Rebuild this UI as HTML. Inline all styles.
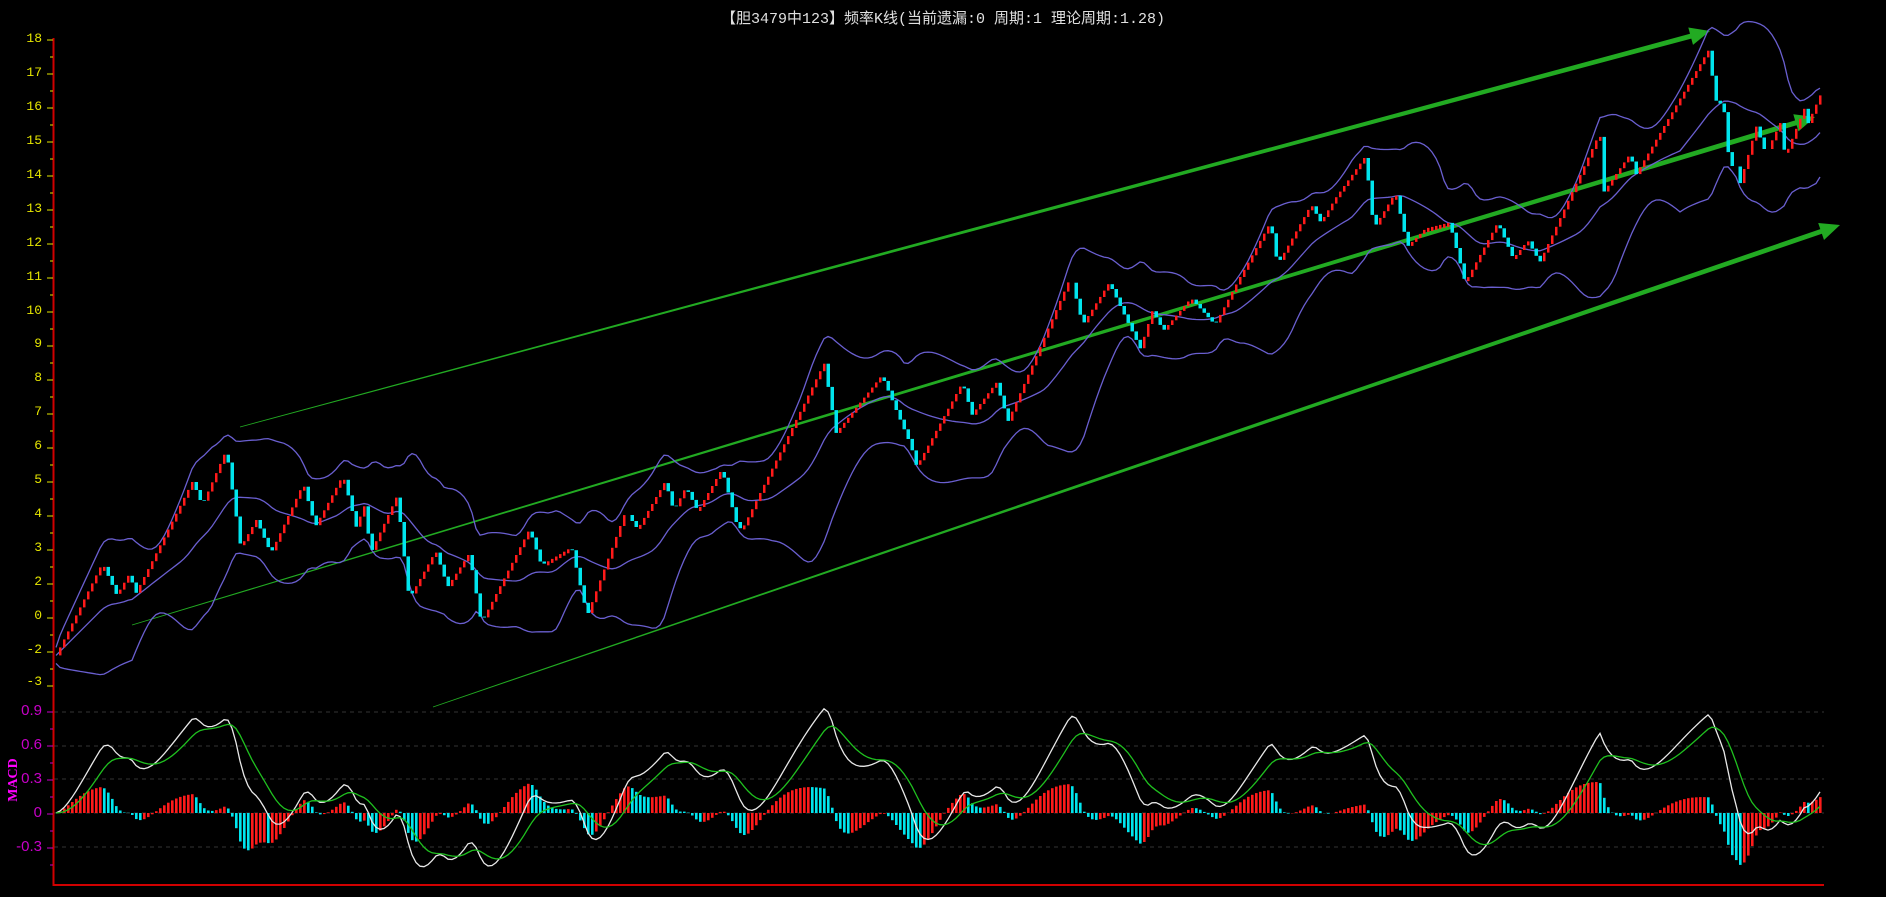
<!DOCTYPE html>
<html><head><meta charset="utf-8">
<style>
html,body{margin:0;padding:0;background:#000;width:1886px;height:897px;overflow:hidden}
#t{position:absolute;left:0;top:7px;width:1886px;text-align:center;color:#e0e0e0;font:15px "Liberation Mono","Noto Sans CJK SC",monospace;white-space:pre}
.yl{position:absolute;left:0;width:42px;text-align:right;color:#e6e600;font:13px "Liberation Mono",monospace}
.ml{position:absolute;left:0;width:42px;text-align:right;color:#c800c8;font:15px "Liberation Sans",sans-serif}
#macd{position:absolute;left:-8px;top:772px;color:#ff00ff;font:bold 14px "Liberation Serif",serif;transform:rotate(-90deg);transform-origin:center}
svg{position:absolute;left:0;top:0}
</style></head><body>
<div id="t">【胆3479中123】频率K线(当前遗漏:0 周期:1 理论周期:1.28)</div>
<div class="yl" style="top:31px">18</div>
<div class="yl" style="top:65px">17</div>
<div class="yl" style="top:99px">16</div>
<div class="yl" style="top:133px">15</div>
<div class="yl" style="top:167px">14</div>
<div class="yl" style="top:201px">13</div>
<div class="yl" style="top:235px">12</div>
<div class="yl" style="top:269px">11</div>
<div class="yl" style="top:303px">10</div>
<div class="yl" style="top:336px">9</div>
<div class="yl" style="top:370px">8</div>
<div class="yl" style="top:404px">7</div>
<div class="yl" style="top:438px">6</div>
<div class="yl" style="top:472px">5</div>
<div class="yl" style="top:506px">4</div>
<div class="yl" style="top:540px">3</div>
<div class="yl" style="top:574px">2</div>
<div class="yl" style="top:608px">0</div>
<div class="yl" style="top:642px">-2</div>
<div class="yl" style="top:674px">-3</div>
<div class="ml" style="top:702px">0.9</div>
<div class="ml" style="top:736px">0.6</div>
<div class="ml" style="top:770px">0.3</div>
<div class="ml" style="top:804px">0</div>
<div class="ml" style="top:838px">-0.3</div>
<div id="macd">MACD</div>
<svg id="s" width="1886" height="897" xmlns="http://www.w3.org/2000/svg"></svg>
<script>
var S=document.getElementById('s'),h='';
var k=1.2028;
var P=[[45,548],[85,468],[97,495],[108,476],[112,495],[160,400],[168,420],[188,374],[200,455],[213,432],[225,460],[252,402],[262,438],[285,395],[296,438],[303,420],[308,460],[330,412],[340,498],[362,458],[372,488],[390,460],[400,518],[440,440],[450,470],[475,455],[488,512],[520,425],[530,440],[553,400],[560,425],[570,405],[580,425],[600,390],[613,438],[617,440],[685,302],[695,360],[733,312],[757,370],[762,388],[800,318],[808,345],[828,318],[838,350],[890,230],[900,270],[922,235],[948,290],[958,258],[967,275],[990,248],[1010,270],[1030,232],[1056,185],[1062,220],[1090,170],[1098,185],[1110,165],[1135,130],[1142,190],[1160,160],[1170,205],[1185,190],[1205,185],[1218,235],[1245,185],[1258,215],[1270,200],[1280,218],[1330,110],[1333,160],[1355,128],[1360,145],[1420,42],[1428,92],[1432,80],[1438,140],[1443,135],[1445,158],[1460,105],[1468,128],[1480,102],[1484,130],[1500,90],[1502,105],[1515,75]];
P=P.map(function(p){return [p[0]*k,p[1]*k]});
function py(x){for(var i=1;i<P.length;i++){if(x<=P[i][0]){var a=P[i-1],b=P[i];return a[1]+(b[1]-a[1])*(x-a[0])/(b[0]-a[0]);}}return P[P.length-1][1];}
// gridlines macd
[712,746,779,813,847].forEach(function(y){h+='<line x1="54" y1="'+y+'" x2="1824" y2="'+y+'" stroke="#333" stroke-dasharray="4,4"/>';});
// axes
h+='<line x1="53.5" y1="38" x2="53.5" y2="886" stroke="#d00000" stroke-width="2"/>';
h+='<line x1="53" y1="885" x2="1824" y2="885" stroke="#d00000" stroke-width="2"/>';
for(var y=40;y<=690;y+=17){h+='<line x1="'+((y-40)%34?50:47)+'" y1="'+y+'" x2="53" y2="'+y+'" stroke="#e6e600"/>';}
for(var y=712;y<=870;y+=17){h+='<line x1="'+(((y-712)%34)?50:47)+'" y1="'+y+'" x2="53" y2="'+y+'" stroke="#c800c8"/>';}
// arrows
function arrow(x1,y1,x2,y2,w0,w1){var dx=x2-x1,dy=y2-y1,L=Math.hypot(dx,dy),ux=dx/L,uy=dy/L,nx=-uy,ny=ux;var hl=20,hw=9;var bx=x2-ux*hl,by=y2-uy*hl;
h+='<polygon fill="#22aa22" points="'+[x1+nx*w0/2,y1+ny*w0/2,bx+nx*w1/2,by+ny*w1/2,bx+nx*hw,by+ny*hw,x2,y2,bx-nx*hw,by-ny*hw,bx-nx*w1/2,by-ny*w1/2,x1-nx*w0/2,y1-ny*w0/2].map(function(v){return v.toFixed(1)}).join(',')+'"/>';}
arrow(240,427,1710,31,0.8,5);arrow(132,625,1815,117,0.8,5);arrow(433,707,1840,225,0.8,5);
// bars
var xs=[],cl=[];for(var x=56;x<=1822;x+=4){xs.push(x);cl.push(py(x));}
var N=xs.length,up=[],mid=[],lo=[];
for(var i=0;i<N;i++){var n=Math.min(20,i+1),s=0,q=0;for(var j=i-n+1;j<=i;j++){s+=cl[j];}var m=s/n;for(j=i-n+1;j<=i;j++)q+=(cl[j]-m)*(cl[j]-m);var sd=Math.sqrt(q/n);mid.push(m);up.push(m-2*sd-8);lo.push(m+2*sd+8);}
function pl(a,c){var d='';for(var i=0;i<N;i++)d+=(i?'L':'M')+xs[i]+' '+a[i].toFixed(1);h+='<path d="'+d+'" fill="none" stroke="'+c+'" stroke-width="1.3"/>';}
pl(up,'#6a5fd0');pl(mid,'#6a5fd0');pl(lo,'#6a5fd0');
for(var i=1;i<N;i++){var a=cl[i-1],b=cl[i];if(b<a-0.5){h+='<rect x="'+(xs[i]-1)+'" y="'+b.toFixed(1)+'" width="2.5" height="'+Math.max(4,a-b).toFixed(1)+'" fill="#ff1a1a"/>';}else if(b>a+0.5){h+='<rect x="'+(xs[i]-1.5)+'" y="'+a.toFixed(1)+'" width="3.5" height="'+(b-a).toFixed(1)+'" fill="#00e5ee"/>';}}
// MACD
var pr=cl.map(function(y){return 18-(y-40)/33.9});
var e12=pr[0],e26=pr[0],dea=0,D=[],E=[],H=[];
for(var i=0;i<N;i++){e12=e12+(pr[i]-e12)*2/13;e26=e26+(pr[i]-e26)*2/27;var dif=e12-e26;dea=dea+(dif-dea)*2/10;D.push(dif);E.push(dea);}
var mx=0;D.forEach(function(v){mx=Math.max(mx,Math.abs(v))});var f=0.93/mx;
function my(v){return 813-v*f*112;}
for(var i=0;i<N;i++){H.push((D[i]-E[i])*2);}
for(var i=0;i<N;i++){var v=H[i],c=(i>0&&v<H[i-1])?'#00e5ee':'#ff1a1a';var y0=813,y1=813-v*f*112*0.55;h+='<rect x="'+(xs[i]-1)+'" y="'+Math.min(y0,y1).toFixed(1)+'" width="2.6" height="'+Math.abs(y1-y0).toFixed(1)+'" fill="'+c+'"/>';}
function ml(a,c){var d='';for(var i=0;i<N;i++)d+=(i?'L':'M')+xs[i]+' '+my(a[i]).toFixed(1);h+='<path d="'+d+'" fill="none" stroke="'+c+'" stroke-width="1.3"/>';}
ml(D,'#e8e8e8');ml(E,'#1fc01f');
S.innerHTML=h;
</script>
</body></html>
